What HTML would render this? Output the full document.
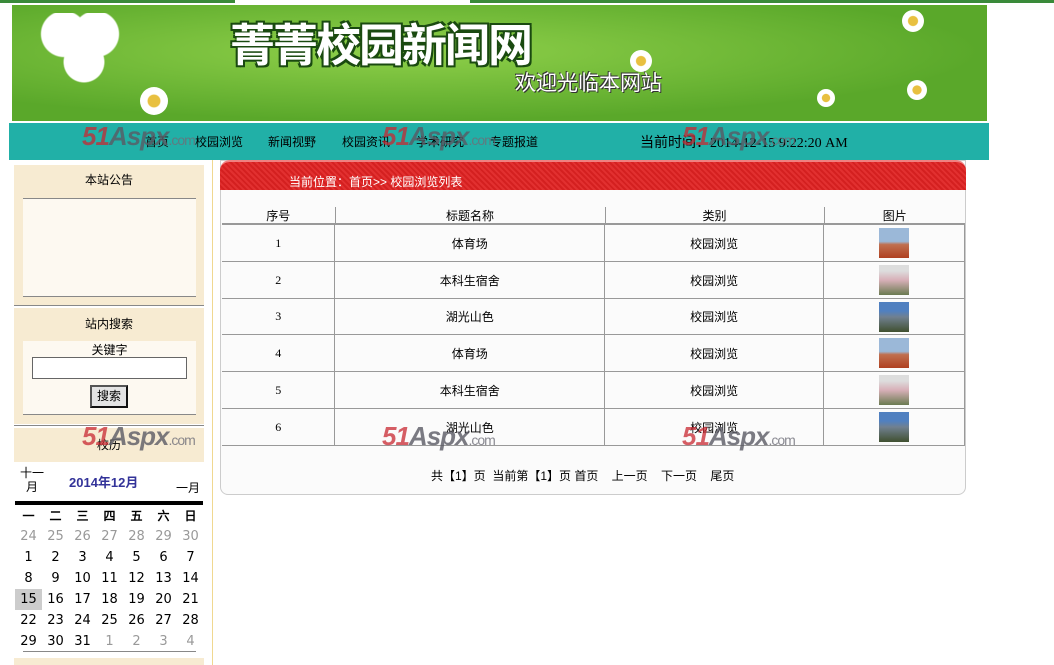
<!DOCTYPE html>
<html><head><meta charset="utf-8"><style>
*{margin:0;padding:0;box-sizing:border-box}
body{width:1054px;height:665px;background:#fff;position:relative;overflow:hidden;font-family:"Liberation Serif","Noto Sans CJK SC",serif;font-size:12px;color:#000}
.a{position:absolute}
.cjk{font-family:"Liberation Sans","Noto Sans CJK SC",sans-serif}
.wm{position:absolute;font-family:"Liberation Sans",sans-serif;font-weight:bold;font-style:italic;font-size:26px;color:rgba(200,40,50,.75);letter-spacing:-1px}
.wm span{color:rgba(90,90,100,.8)}
.wm small{font-size:14px;color:rgba(110,110,120,.8);font-style:normal;font-weight:normal}
table{border-collapse:collapse}
td{text-align:center}
.cal td{width:27px;height:21px;font-family:"DejaVu Sans",sans-serif;font-size:13px;text-align:center}
.g{color:#999}
.pic{display:inline-block;width:30px;height:30px;vertical-align:middle}
</style></head><body>
<div class="a" style="left:0;top:0;width:235px;height:3px;background:#3a8a3a"></div>
<div class="a" style="left:470px;top:0;width:584px;height:3px;background:#3a8a3a"></div>
<div class="a" style="left:12px;top:5px;width:975px;height:116px;background:radial-gradient(ellipse at 40% 40%,#8fd04a,#5aa82a 70%),#5aa82a;overflow:hidden">
 <div class="a" style="left:28px;top:8px;width:80px;height:70px;background:radial-gradient(circle at 30% 30%,#fff 30%,transparent 32%),radial-gradient(circle at 70% 30%,#fff 30%,transparent 32%),radial-gradient(circle at 55% 70%,#fff 30%,transparent 32%)"></div>
 <div class="a cjk" style="left:218px;top:16px;font-size:45px;line-height:50px;font-weight:bold;color:#fff;text-shadow:2px 2px 0 #1a4a10,-2px -2px 0 #1a4a10,2px -2px 0 #1a4a10,-2px 2px 0 #1a4a10;letter-spacing:-2px">菁菁校园新闻网</div>
 <div class="a cjk" style="left:503px;top:62px;font-size:21px;color:#fff;text-shadow:1px 1px 0 #333,-1px -1px 0 #333">欢迎光临本网站</div>
 <div class="a" style="left:128px;top:82px;width:28px;height:28px;border-radius:50%;background:radial-gradient(#e8c040 30%,#fff 35%)"></div>
 <div class="a" style="left:618px;top:45px;width:22px;height:22px;border-radius:50%;background:radial-gradient(#e8c040 30%,#fff 35%)"></div>
 <div class="a" style="left:805px;top:84px;width:18px;height:18px;border-radius:50%;background:radial-gradient(#e8c040 30%,#fff 35%)"></div>
 <div class="a" style="left:895px;top:75px;width:20px;height:20px;border-radius:50%;background:radial-gradient(#e8c040 30%,#fff 35%)"></div>
 <div class="a" style="left:890px;top:5px;width:22px;height:22px;border-radius:50%;background:radial-gradient(#e8c040 30%,#fff 35%)"></div>
</div>
<div class="a" style="left:9px;top:123px;width:980px;height:37px;background:#21b0a7"></div>
<div class="a cjk" style="top:133px;left:145px;font-size:12px;color:#111">首页</div>
<div class="a cjk" style="top:133px;left:195px;font-size:12px">校园浏览</div>
<div class="a cjk" style="top:133px;left:268px;font-size:12px">新闻视野</div>
<div class="a cjk" style="top:133px;left:342px;font-size:12px">校园资讯</div>
<div class="a cjk" style="top:133px;left:416px;font-size:12px">学术研究</div>
<div class="a cjk" style="top:133px;left:490px;font-size:12px">专题报道</div>
<div class="a" style="top:132px;left:640px;font-size:14px;font-family:'Liberation Serif','Noto Sans CJK SC',serif">当前时间：2014-12-15 9:22:20 AM</div>
<!-- left column -->
<div class="a" style="left:212px;top:160px;width:1px;height:505px;background:#f0d890"></div>
<div class="a" style="left:14px;top:165px;width:190px;height:140px;background:#f7ebd2"></div>
<div class="a cjk" style="left:14px;top:171px;width:190px;text-align:center;font-size:12px">本站公告</div>
<div class="a" style="left:23px;top:198px;width:173px;height:99px;background:#fdf9f1;border-top:1px solid #888;border-bottom:1px solid #888"></div>
<div class="a" style="left:14px;top:305px;width:190px;height:1px;background:#888"></div>
<div class="a" style="left:14px;top:308px;width:190px;height:116px;background:#f7ebd2"></div>
<div class="a cjk" style="left:14px;top:315px;width:190px;text-align:center;font-size:12px">站内搜索</div>
<div class="a" style="left:23px;top:341px;width:173px;height:74px;background:#fdf9f1;border-bottom:1px solid #888"></div>
<div class="a cjk" style="left:23px;top:341px;width:173px;text-align:center;font-size:12px">关键字</div>
<div class="a" style="left:32px;top:357px;width:155px;height:22px;background:#fff;border:1px solid #666"></div>
<div class="a cjk" style="left:90px;top:385px;width:38px;height:23px;background:#e4e4e4;border:2px solid #222;border-color:#555 #111 #111 #555;text-align:center;font-size:12px;line-height:19px">搜索</div>
<div class="a" style="left:14px;top:425px;width:190px;height:1px;background:#888"></div>
<div class="a" style="left:14px;top:428px;width:190px;height:35px;background:#f7ebd2"></div>
<div class="a cjk" style="left:14px;top:436px;width:190px;text-align:center;font-size:12px">校历</div>
<div class="a" style="left:14px;top:462px;width:190px;height:203px;background:#f7ebd2"></div>
<div class="a" style="left:14px;top:462px;width:190px;height:196px;background:#fff"></div>
<div class="a cjk" style="left:20px;top:466px;font-size:12px;line-height:14px;text-align:center">十一<br>月</div>
<div class="a cjk" style="left:69px;top:472px;font-size:13px;font-weight:bold;color:#333399">2014年12月</div>
<div class="a cjk" style="left:176px;top:479px;font-size:12px">一月</div>
<div class="a" style="left:15px;top:501px;width:188px;height:4px;background:#000"></div>
<table class="cal a" style="left:15px;top:505px">
<tr><td class="cjk" style="font-size:12px;font-weight:bold">一</td><td class="cjk" style="font-size:12px;font-weight:bold">二</td><td class="cjk" style="font-size:12px;font-weight:bold">三</td><td class="cjk" style="font-size:12px;font-weight:bold">四</td><td class="cjk" style="font-size:12px;font-weight:bold">五</td><td class="cjk" style="font-size:12px;font-weight:bold">六</td><td class="cjk" style="font-size:12px;font-weight:bold">日</td></tr>
<tr class="g"><td>24</td><td>25</td><td>26</td><td>27</td><td>28</td><td>29</td><td>30</td></tr>
<tr><td>1</td><td>2</td><td>3</td><td>4</td><td>5</td><td>6</td><td>7</td></tr>
<tr><td>8</td><td>9</td><td>10</td><td>11</td><td>12</td><td>13</td><td>14</td></tr>
<tr><td style="background:#ccc">15</td><td>16</td><td>17</td><td>18</td><td>19</td><td>20</td><td>21</td></tr>
<tr><td>22</td><td>23</td><td>24</td><td>25</td><td>26</td><td>27</td><td>28</td></tr>
<tr><td>29</td><td>30</td><td>31</td><td class="g">1</td><td class="g">2</td><td class="g">3</td><td class="g">4</td></tr>
</table>
<div class="a" style="left:23px;top:651px;width:173px;height:1px;background:#888"></div>
<!-- main -->
<div class="a" style="left:220px;top:160px;width:746px;height:335px;background:#fbfbfb;border:1px solid #ccc;border-radius:0 0 8px 8px"></div>
<div class="a" style="left:220px;top:160px;width:746px;height:30px;background:repeating-linear-gradient(45deg,#e23030 0 2px,#d42020 2px 4px);border-radius:10px 10px 0 0;border-top:2px solid #f08080"></div>
<div class="a cjk" style="left:289px;top:173px;color:#fff;font-size:12px">当前位置：首页&gt;&gt; 校园浏览列表</div>
<table class="a" style="left:222px;top:207px;width:743px">
<colgroup><col style="width:113px"><col style="width:270px"><col style="width:219px"><col style="width:141px"></colgroup>
<tr style="height:17px" class="cjk"><td style="border-right:1px solid #999">序号</td><td style="border-right:1px solid #999">标题名称</td><td style="border-right:1px solid #999">类别</td><td>图片</td></tr>
</table>
<div class="a" style="left:222px;top:223px;width:743px;height:222px;border-top:1px solid #999">
<table style="width:743px">
<colgroup><col style="width:113px"><col style="width:270px"><col style="width:219px"><col style="width:141px"></colgroup>
<tr style="height:37px"><td style="border:1px solid #999;border-left:0">1</td><td class="cjk" style="border:1px solid #999">体育场</td><td class="cjk" style="border:1px solid #999">校园浏览</td><td style="border:1px solid #999"><span class="pic" style="background:linear-gradient(#9bb8d8 45%,#c07050 55%,#b04020)"></span></td></tr>
<tr style="height:37px"><td style="border:1px solid #999;border-left:0">2</td><td class="cjk" style="border:1px solid #999">本科生宿舍</td><td class="cjk" style="border:1px solid #999">校园浏览</td><td style="border:1px solid #999"><span class="pic" style="background:linear-gradient(#ddd 20%,#d8b0b8 50%,#6a7a50)"></span></td></tr>
<tr style="height:36px"><td style="border:1px solid #999;border-left:0">3</td><td class="cjk" style="border:1px solid #999">湖光山色</td><td class="cjk" style="border:1px solid #999">校园浏览</td><td style="border:1px solid #999"><span class="pic" style="background:linear-gradient(#5080c0 30%,#708090 50%,#405030)"></span></td></tr>
<tr style="height:37px"><td style="border:1px solid #999;border-left:0">4</td><td class="cjk" style="border:1px solid #999">体育场</td><td class="cjk" style="border:1px solid #999">校园浏览</td><td style="border:1px solid #999"><span class="pic" style="background:linear-gradient(#9bb8d8 45%,#c07050 55%,#b04020)"></span></td></tr>
<tr style="height:37px"><td style="border:1px solid #999;border-left:0">5</td><td class="cjk" style="border:1px solid #999">本科生宿舍</td><td class="cjk" style="border:1px solid #999">校园浏览</td><td style="border:1px solid #999"><span class="pic" style="background:linear-gradient(#ddd 20%,#d8b0b8 50%,#6a7a50)"></span></td></tr>
<tr style="height:37px"><td style="border:1px solid #999;border-left:0">6</td><td class="cjk" style="border:1px solid #999">湖光山色</td><td class="cjk" style="border:1px solid #999">校园浏览</td><td style="border:1px solid #999"><span class="pic" style="background:linear-gradient(#5080c0 30%,#708090 50%,#405030)"></span></td></tr>
</table></div>
<div class="a cjk" style="left:431px;top:467px;font-size:12px;white-space:pre">共【1】页  当前第【1】页 首页    上一页    下一页    尾页</div>
<!-- watermarks -->
<div class="wm" style="left:82px;top:121px">51<span>Aspx</span><small>.com</small></div>
<div class="wm" style="left:382px;top:121px">51<span>Aspx</span><small>.com</small></div>
<div class="wm" style="left:682px;top:121px">51<span>Aspx</span><small>.com</small></div>
<div class="wm" style="left:82px;top:421px">51<span>Aspx</span><small>.com</small></div>
<div class="wm" style="left:382px;top:421px">51<span>Aspx</span><small>.com</small></div>
<div class="wm" style="left:682px;top:421px">51<span>Aspx</span><small>.com</small></div>
</body></html>
